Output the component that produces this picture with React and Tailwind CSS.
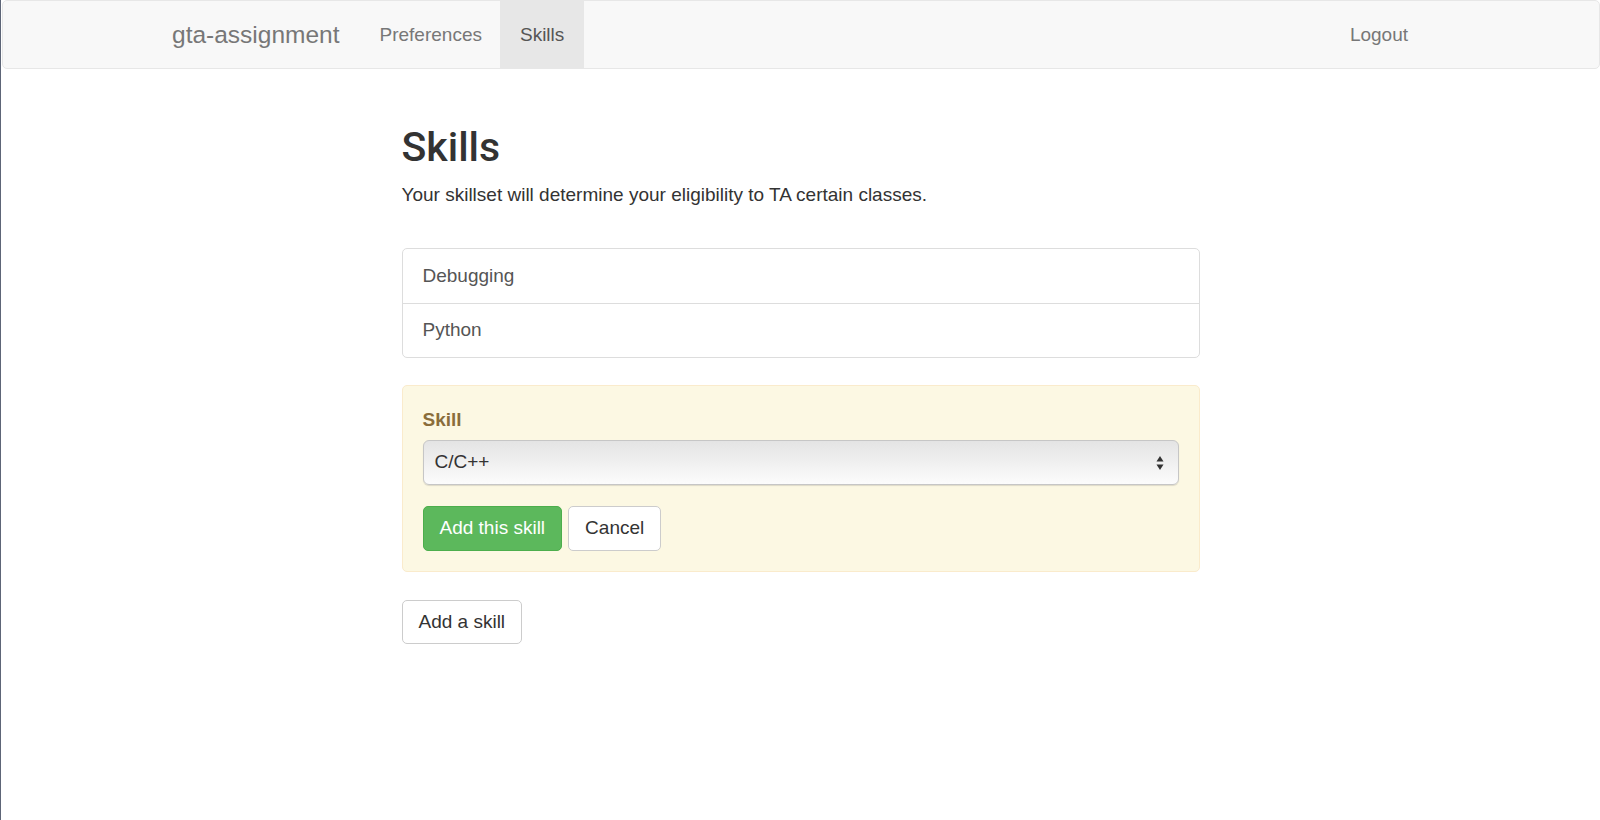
import React, { useState } from 'react';

const skills = ['Debugging', 'Python'];

const SelectArrows = () => (
  <svg width="8" height="16" viewBox="0 0 8 16" className="shrink-0">
    <path d="M4 1 L7.5 6.5 L0.5 6.5 Z" fill="#333" />
    <path d="M4 15 L7.5 9.5 L0.5 9.5 Z" fill="#333" />
  </svg>
);

const App = () => {
  const [choice] = useState('C/C++');

  return (
    <div className="min-h-screen bg-white border-l border-[#5d6577] font-['Liberation_Sans',Arial,sans-serif] text-[#333]">
      {/* Navbar */}
      <nav className="ml-px h-[69px] bg-[#f8f8f8] border border-[#e7e7e7] rounded-[5px] flex pl-[149px] pr-[171px]">
        <a className="h-full flex items-center pt-[2px] px-[20px] text-[24.5px] text-[#777]">gta-assignment</a>
        <a className="h-full flex items-center pt-[2px] pl-[20px] pr-[18px] text-[19px] text-[#777]">Preferences</a>
        <a className="h-full flex items-center pt-[2px] px-[20px] text-[19px] text-[#555] bg-[#e7e7e7]">Skills</a>
        <a className="ml-auto h-full flex items-center pt-[2px] px-[20px] text-[19px] text-[#777]">Logout</a>
      </nav>

      <main className="w-[798px] mx-auto pt-[56px]">
        <h2 className="font-['Roboto',Arial,sans-serif] font-medium text-[41px] leading-[45px] text-[#333] mb-[11px]">Skills</h2>
        <p className="text-[19px] leading-[27px]">Your skillset will determine your eligibility to TA certain classes.</p>

        {/* Skill list */}
        <div className="mt-[40px] border border-[#ddd] rounded-[5px]">
          {skills.map((s, i) => (
            <div
              key={s}
              className={`h-[54px] flex items-center px-[20px] text-[19px] text-[#555] ${i > 0 ? 'border-t border-[#ddd]' : ''}`}
            >
              {s}
            </div>
          ))}
        </div>

        {/* Add form */}
        <div className="mt-[27px] bg-[#fcf8e3] border border-[#faebcc] rounded-[5px] px-[20px] pt-[20px] pb-[20px]">
          <label className="block text-[19px] leading-[27px] font-bold text-[#8a6d3b] mb-[7px]">Skill</label>
          <div className="h-[45px] flex items-center justify-between pl-[11px] pr-[14px] rounded-[6px] border border-[#c6c6c6] bg-gradient-to-b from-[#e4e4e4] to-[#fcfcfc] shadow-[0_1px_1px_rgba(0,0,0,0.12)] text-[19px] text-[#333]">
            <span>{choice}</span>
            <SelectArrows />
          </div>
          <div className="mt-[21px] flex gap-[6px]">
            <button className="h-[45px] px-[16px] rounded-[5px] bg-[#5cb85c] border border-[#4cae4c] text-white text-[19px]">Add this skill</button>
            <button className="h-[45px] px-[16px] rounded-[5px] bg-white border border-[#ccc] text-[#333] text-[19px]">Cancel</button>
          </div>
        </div>

        <button className="mt-[28px] h-[44px] px-[16px] rounded-[5px] bg-white border border-[#ccc] text-[#333] text-[19px]">Add a skill</button>
      </main>
    </div>
  );
};

export default App;
